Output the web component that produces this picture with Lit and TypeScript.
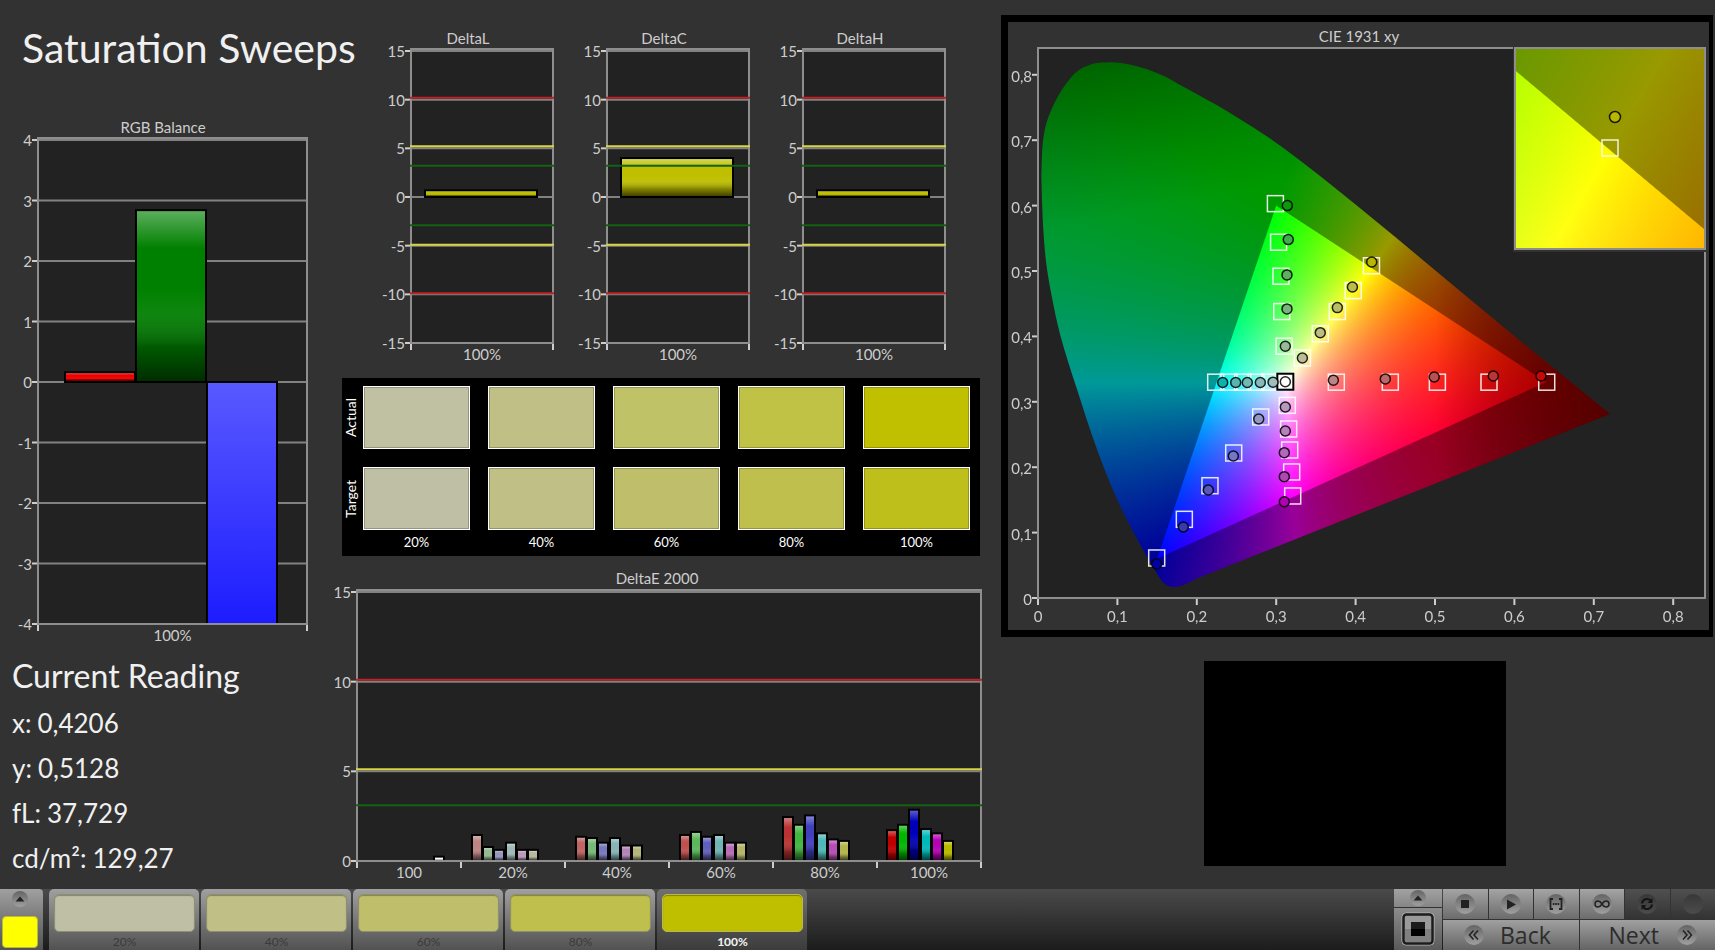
import { LitElement, html, svg, css, nothing } from "lit";
import { customElement, property } from "lit/decorators.js";

interface Bar { x: number; w: number; v: number; color: string; deep?: boolean }
interface Limit { v: number; color: string }
interface ChartSpec {
  w: number; h: number;
  left: number; top: number; right: number; bottom: number;
  title: string; titleX: number; titleY: number;
  min: number; max: number; step: number;
  cats: string[];
  limits: Limit[];
  bars: Bar[];
}

const RED = "#bc2226", YELLOW = "#d8d444", GREEN = "#126212";

@customElement("bar-chart")
class BarChart extends LitElement {
  @property({ attribute: false }) spec!: ChartSpec;

  static styles = css`
    :host { display: block; }
    .chart { display: block; width: 100%; height: auto; overflow: visible; }
    .label { font: 15px Lato, "Liberation Sans", sans-serif; fill: #cdcdcd; }
    .mid { text-anchor: middle; }
    .end { text-anchor: end; }
    .plot { fill: #222; }
    .frame { fill: none; stroke: #8e8e8e; stroke-width: 2; }
    .grid { stroke: #818181; stroke-width: 2; }
    .limit { stroke-width: 2; }
    .tick { stroke: #cdcdcd; stroke-width: 2; }
    .bar { stroke: #000; stroke-width: 2; }
    .deep { fill: url(#deep); }
    .gloss { fill: url(#gloss); }
  `;

  render() {
    const s = this.spec;
    const y = (v: number) => s.top + 2 + ((s.max - v) / (s.max - s.min)) * (s.bottom - s.top - 2);
    const limitY = (v: number) => y(v) - (v > 0 ? 2 : 1);
    const ticks: number[] = [];
    for (let v = s.max; v >= s.min; v -= s.step) ticks.push(v);
    const catW = (s.right - s.left) / s.cats.length;
    return html`
      <svg class="chart" viewBox="0 0 ${s.w} ${s.h}" role="img" aria-label=${s.title}>
        <defs>
          <linearGradient id="gloss" x1="0" y1="0" x2="0" y2="1">
            <stop offset="0" stop-color="#fff" stop-opacity="0.36" />
            <stop offset="0.22" stop-color="#fff" stop-opacity="0" />
            <stop offset="0.45" stop-color="#fff" stop-opacity="0" />
            <stop offset="0.56" stop-color="#fff" stop-opacity="0.04" />
            <stop offset="0.66" stop-color="#777" stop-opacity="0.12" />
            <stop offset="0.8" stop-color="#000" stop-opacity="0.3" />
            <stop offset="1" stop-color="#000" stop-opacity="0.65" />
          </linearGradient>
          <linearGradient id="deep" x1="0" y1="0" x2="0" y2="1">
            <stop offset="0" stop-color="#fff" stop-opacity="0.35" />
            <stop offset="1" stop-color="#fff" stop-opacity="0.1" />
          </linearGradient>
          <clipPath id="plot">
            <rect x=${s.left} y=${s.top} width=${s.right - s.left} height=${s.bottom - s.top} />
          </clipPath>
        </defs>
        <text class="label mid" x=${s.titleX} y=${s.titleY}>${s.title}</text>
        <rect class="plot" x=${s.left} y=${s.top} width=${s.right - s.left} height=${s.bottom - s.top} />
        ${ticks.map((v) => svg`
          <line class="grid" x1=${s.left} x2=${s.right} y1=${y(v)} y2=${y(v)} />
          <line class="tick" x1=${s.left - 6} x2=${s.left - 1} y1=${y(v)} y2=${y(v)} />
          <text class="label end" x=${s.left - 6} y=${y(v) + 6}>${v}</text>`)}
        <g clip-path="url(#plot)">
          ${s.bars.map((b) => {
            const top = Math.min(y(b.v), y(0)), h = Math.abs(y(b.v) - y(0));
            return svg`
              <rect class="bar" x=${b.x} y=${top} width=${b.w} height=${h} fill=${b.color} />
              <rect class=${b.deep ? "deep" : "gloss"} x=${b.x + 1} y=${top + 1} width=${b.w - 2} height=${Math.max(h - 2, 0)} />`;
          })}
        </g>
        <rect class="frame" x=${s.left} y=${s.top} width=${s.right - s.left} height=${s.bottom - s.top} />
        ${s.limits.map((l) => svg`
          <line class="limit" x1=${s.left - 1} x2=${s.right + 1} y1=${limitY(l.v)} y2=${limitY(l.v)} stroke=${l.color} />`)}
        ${s.cats.map((c, i) => svg`
          <line class="tick" x1=${s.left + i * catW} x2=${s.left + i * catW} y1=${s.bottom + 1} y2=${s.bottom + 7} />
          <text class="label mid" x=${s.left + (i + 0.5) * catW} y=${s.bottom + 17}>${c}</text>`)}
        <line class="tick" x1=${s.right} x2=${s.right} y1=${s.bottom + 1} y2=${s.bottom + 7} />
      </svg>`;
  }
}

const deltaSpec = (title: string, v: number): ChartSpec => ({
  w: 196, h: 345, left: 69, top: 24, right: 211, bottom: 318,
  title, titleX: 126, titleY: 19, min: -15, max: 15, step: 5, cats: ["100%"],
  limits: [
    { v: 10, color: RED }, { v: 5, color: YELLOW }, { v: 3, color: GREEN },
    { v: -3, color: GREEN }, { v: -5, color: YELLOW }, { v: -10, color: RED },
  ],
  bars: [{ x: 83, w: 112, v, color: "#bfbf00" }],
});

const rgbSpec: ChartSpec = {
  w: 342, h: 530, left: 38, top: 21, right: 307, bottom: 507,
  title: "RGB Balance", titleX: 163, titleY: 16, min: -4, max: 4, step: 1, cats: ["100%"], limits: [],
  bars: [
    { x: 65, w: 70, v: 0.16, color: "#f00000" },
    { x: 136, w: 70, v: 2.84, color: "#008000" },
    { x: 207, w: 70, v: -4.2, color: "#0000ff", deep: true },
  ],
};

const deltaEGroups: { x: number; values: number[]; colors: string[] }[] = [
  { x: 130, values: [1.45, 0.78, 0.62, 1.02, 0.62, 0.62], colors: ["#bd8484", "#94b894", "#9494bd", "#a0b8b8", "#b89ab8", "#b8b89c"] },
  { x: 234, values: [1.35, 1.28, 1.02, 1.28, 0.86, 0.86], colors: ["#bf6464", "#78b878", "#7878bd", "#88b4b8", "#b484b8", "#b4b47c"] },
  { x: 338, values: [1.45, 1.62, 1.35, 1.45, 1.02, 1.02], colors: ["#bf5050", "#5cb85c", "#6060bd", "#70b4b4", "#b86cb4", "#b4b468"] },
  { x: 441, values: [2.45, 2.02, 2.54, 1.54, 1.2, 1.12], colors: ["#b83434", "#40b840", "#4040bd", "#50b8b8", "#b84cb4", "#b4b44c"] },
  { x: 545, values: [1.72, 2.02, 2.86, 1.78, 1.54, 1.12], colors: ["#bf0000", "#00b800", "#0000b8", "#00b8b8", "#b800b8", "#b8b800"] },
];

const deltaESpec: ChartSpec = {
  w: 658, h: 320, left: 15, top: 24, right: 639, bottom: 295,
  title: "DeltaE 2000", titleX: 315, titleY: 18, min: 0, max: 15, step: 5,
  cats: ["100", "20%", "40%", "60%", "80%", "100%"],
  limits: [{ v: 10, color: RED }, { v: 5, color: YELLOW }, { v: 3, color: GREEN }],
  bars: [
    { x: 92, w: 10, v: 0.24, color: "#fff" },
    ...deltaEGroups.flatMap((g) => g.values.map((v, i) => ({ x: g.x + Math.round(i * 11.2), w: 10, v, color: g.colors[i] }))),
  ],
};

type P = [number, number];

const LOCUS: P[] = [
  [0.0042, 0.645], [0.0059, 0.6947], [0.0109, 0.7275], [0.0228, 0.762], [0.0361, 0.7875], [0.0508, 0.8067],
  [0.0718, 0.8176], [0.088, 0.819], [0.1054, 0.818], [0.131, 0.8109], [0.1558, 0.7997], [0.1814, 0.7829], [0.2393, 0.7436],
  [0.3069, 0.6901], [0.3992, 0.6024], [0.6045, 0.396], [0.7204, 0.2813],
];
const LOCUS_LOW: P[] = [
  [0.2015, 0.0306], [0.186, 0.0215], [0.1746, 0.0171], [0.1642, 0.0182], [0.1558, 0.0262], [0.141, 0.0557],
  [0.12, 0.101], [0.0985, 0.154], [0.0739, 0.2285], [0.0487, 0.3206], [0.0285, 0.4], [0.0167, 0.4653],
  [0.0101, 0.5145], [0.0059, 0.58], [0.0042, 0.645],
];
const GAMUT: P[] = [[0.64, 0.33], [0.3, 0.6], [0.15, 0.06]];

const TARGETS: P[] = [
  [0.299, 0.603], [0.303, 0.544], [0.306, 0.492], [0.307, 0.438], [0.31, 0.385],
  [0.333, 0.367], [0.3555, 0.404], [0.377, 0.438], [0.397, 0.47], [0.42, 0.508],
  [0.3757, 0.33], [0.4437, 0.33], [0.503, 0.33], [0.568, 0.33], [0.6407, 0.33],
  [0.2238, 0.33], [0.2405, 0.33], [0.2578, 0.33], [0.2746, 0.33], [0.292, 0.33],
  [0.314, 0.2946], [0.3157, 0.2584], [0.317, 0.2263], [0.3195, 0.1927], [0.3208, 0.156],
  [0.2805, 0.2768], [0.2465, 0.2217], [0.2166, 0.1717], [0.1843, 0.1203], [0.1495, 0.0612],
];
const READINGS: [number, number, string][] = [
  [0.314, 0.6, "#0b9a0b"], [0.3152, 0.548, "#3fae4f"], [0.3136, 0.494, "#5cb060"], [0.3136, 0.442, "#78b47c"], [0.3115, 0.385, "#98b898"],
  [0.333, 0.367, "#bcbc9c"], [0.3555, 0.4057, "#bcbc84"], [0.377, 0.444, "#bcbc68"], [0.396, 0.4755, "#bcbc48"], [0.4203, 0.5138, "#b8b800"],
  [0.372, 0.333, "#bc8484"], [0.4374, 0.335, "#bc6868"], [0.499, 0.338, "#bc5050"], [0.5734, 0.3395, "#bc3434"], [0.6335, 0.3395, "#c80808"],
  [0.2326, 0.3295, "#10b0b0"], [0.249, 0.3295, "#58b4b0"], [0.2636, 0.3295, "#74b8b4"], [0.28, 0.3295, "#88b8b8"], [0.296, 0.33, "#a0bcbc"],
  [0.3115, 0.292, "#b898bc"], [0.3115, 0.2554, "#b880bc"], [0.3102, 0.2222, "#b468bc"], [0.3102, 0.1855, "#b048b4"], [0.3102, 0.1472, "#b000b0"],
  [0.278, 0.2737, "#9498c4"], [0.246, 0.2171, "#7478c4"], [0.2145, 0.1651, "#5858bc"], [0.183, 0.1086, "#3838b0"], [0.1495, 0.052, "#0000a8"],
];

/** Piecewise-linear lookup over [input, output] pairs. */
const ramp = (v: number, stops: P[]) => {
  if (v <= stops[0][0]) return stops[0][1];
  for (let i = 1; i < stops.length; i++) {
    const [a, fa] = stops[i - 1], [b, fb] = stops[i];
    if (v <= b) return fa + ((fb - fa) * (v - a)) / (b - a);
  }
  return stops[stops.length - 1][1];
};

/** Paints chromaticity colours over a window of the xy plane; dimmed outside the gamut triangle. */
function paint(canvas: HTMLCanvasElement, x0: number, x1: number, y0: number, y1: number) {
  const ctx = canvas.getContext("2d")!;
  const { width: W, height: H } = canvas;
  const img = ctx.createImageData(W, H);
  const kx = W / (x1 - x0), ky = H / (y1 - y0);
  const g = GAMUT.map(([x, y]) => [(x - x0) * kx, (y1 - y) * ky]);
  for (let j = 0; j < H; j++) {
    for (let i = 0; i < W; i++) {
      const x = x0 + (i + 0.5) / kx, y = y1 - (j + 0.5) / ky, z = 1 - x - y;
      const r = Math.max(0, 3.2406 * x - 1.5372 * y - 0.4986 * z);
      const gr = Math.max(0, -0.9689 * x + 1.8758 * y + 0.0415 * z);
      const b = Math.max(0, 0.0557 * x - 0.204 * y + 1.057 * z);
      const m = Math.max(r, gr, b, 1e-6);
      let inside = 1;
      for (let e = 0; e < 3; e++) {
        const [ax, ay] = g[e], [bx, by] = g[(e + 1) % 3];
        const d = ((by - ay) * (i + 0.5 - ax) - (bx - ax) * (j + 0.5 - ay)) / Math.hypot(bx - ax, by - ay);
        inside = Math.min(inside, Math.max(0, Math.min(1, d + 0.5)));
      }
      const fall = ramp(x, [[0.5, 1], [0.57, 0.8], [0.64, 0.66], [0.72, 0.55]]) *
        ramp(y - 0.25 * x, [[0.56, 1], [0.64, 0.9], [0.8, 0.66]]);
      const k = (255 / m) * fall * (0.6 + 0.4 * inside);
      const o = (j * W + i) * 4;
      img.data[o] = r * k; img.data[o + 1] = gr * k; img.data[o + 2] = b * k; img.data[o + 3] = 255;
    }
  }
  ctx.putImageData(img, 0, 0);
  ctx.globalCompositeOperation = "destination-in";
  const sx = (x: number) => (x - x0) * kx, sy = (y: number) => (y1 - y) * ky;
  ctx.beginPath();
  ctx.moveTo(sx(LOCUS[0][0]), sy(LOCUS[0][1]));
  for (const run of [LOCUS, LOCUS_LOW]) {
    ctx.lineTo(sx(run[0][0]), sy(run[0][1]));
    for (let i = 0; i < run.length - 1; i++) {
      const p0 = run[Math.max(0, i - 1)], p1 = run[i], p2 = run[i + 1], p3 = run[Math.min(run.length - 1, i + 2)];
      const d = Math.hypot(p2[0] - p1[0], p2[1] - p1[1]);
      const tangent = (a: P, b: P): P => {
        const n = Math.hypot(b[0] - a[0], b[1] - a[1]) || 1;
        return [((b[0] - a[0]) / n) * d / 3, ((b[1] - a[1]) / n) * d / 3];
      };
      const t1 = tangent(p0, p2), t2 = tangent(p1, p3);
      ctx.bezierCurveTo(sx(p1[0] + t1[0]), sy(p1[1] + t1[1]), sx(p2[0] - t2[0]), sy(p2[1] - t2[1]), sx(p2[0]), sy(p2[1]));
    }
  }
  ctx.closePath();
  ctx.fill();
}

@customElement("cie-chart")
class CieChart extends LitElement {
  static styles = css`
    :host { display: block; }
    .chart { display: block; width: 100%; height: auto; }
    .label { font: 15px Lato, "Liberation Sans", sans-serif; fill: #cdcdcd; }
    .mid { text-anchor: middle; }
    .end { text-anchor: end; }
    .plot { fill: #222; }
    .frame { fill: none; stroke: #8e8e8e; stroke-width: 2; }
    .tick { stroke: #cdcdcd; stroke-width: 2; }
    .map { display: block; width: 100%; height: 100%; }
    .target { fill: none; stroke: #fff; stroke-opacity: 0.88; stroke-width: 1.5; }
    .reading { stroke: #000; stroke-opacity: 0.85; stroke-width: 1.5; }
    .white { fill: #fff; stroke: #000; stroke-width: 2; }
    .matte { fill: #323232; }
  `;

  firstUpdated() {
    const [main, inset] = Array.from(this.renderRoot.querySelectorAll("canvas"));
    paint(main, 0, 667 / 794, 0, 550 / 654);
    paint(inset, 0.3945, 0.4445, 0.4805, 0.5305);
  }

  render() {
    const L = 30, T = 26, W = 667, H = 550;
    const sx = (x: number) => L + x * 794, sy = (y: number) => T + H - y * 654;
    const steps = [0, 1, 2, 3, 4, 5, 6, 7, 8];
    const name = (n: number) => (n === 0 ? "0" : `0,${n}`);
    return html`
      <svg class="chart" viewBox="0 0 701 608" role="img" aria-label="CIE 1931 xy">
        <text class="label mid" x="351" y="20">CIE 1931 xy</text>
        <rect class="plot" x=${L} y=${T} width=${W} height=${H} />
        <foreignObject x=${L} y=${T} width=${W} height=${H}>
          <canvas class="map" width=${W} height=${H}></canvas>
        </foreignObject>
        <rect class="frame" x=${L} y=${T} width=${W} height=${H} />
        ${steps.map((n) => svg`
          <line class="tick" x1=${sx(n / 10)} x2=${sx(n / 10)} y1=${T + H + 1} y2=${T + H + 7} />
          <text class="label mid" x=${sx(n / 10)} y=${T + H + 24}>${name(n)}</text>
          <line class="tick" x1=${L - 6} x2=${L - 1} y1=${sy(n / 10)} y2=${sy(n / 10)} />
          <text class="label end" x=${L - 6} y=${sy(n / 10) + 7}>${name(n)}</text>`)}
        ${TARGETS.map(([x, y]) => svg`<rect class="target" x=${sx(x) - 8} y=${sy(y) - 8} width="16" height="16" />`)}
        <rect class="white" x=${sx(0.3115) - 8} y=${sy(0.3307) - 8} width="16" height="16" />
        <circle class="reading" cx=${sx(0.3115)} cy=${sy(0.3307)} r="5" fill="#fff" />
        ${READINGS.map(([x, y, c]) => svg`<circle class="reading" cx=${sx(x)} cy=${sy(y)} r="5" fill=${c} />`)}
        <rect class="matte" x="505" y="24" width="196" height="206" />
        <foreignObject x="507" y="26" width="190" height="201">
          <canvas class="map" width="190" height="201"></canvas>
        </foreignObject>
        <rect class="frame" x="507" y="26" width="190" height="201" />
        <rect class="target" x="594" y="118" width="16" height="16" />
        <circle class="reading" cx="607" cy="95" r="5.5" fill="#b8b800" />
      </svg>`;
  }
}

const LEVELS = ["20%", "40%", "60%", "80%", "100%"];
const ACTUAL = ["#c0c0a3", "#c0c086", "#c0c268", "#c0c246", "#c0c000"];
const TARGET = ["#bfbfa5", "#bfbf86", "#bfbf6b", "#bfbf4d", "#bfbf1c"];
const STEP = ["#bfbfa5", "#bfbf86", "#bfbf6b", "#bfbf4d", "#bfbf00"];

@customElement("app-root")
class AppRoot extends LitElement {
  static styles = css`
    :host {
      display: flex; flex-direction: column; min-height: 100vh; overflow-x: hidden;
      background: #323232; color: #f0f0f0; font-family: Lato, "Liberation Sans", sans-serif;
    }
    * { box-sizing: border-box; }
    h1, h2, dl, dt, dd { margin: 0; font-weight: 400; }
    button { font: inherit; border: 0; padding: 0; margin: 0; }
    .main { flex: 1; display: grid; grid-template-columns: 342fr 658fr 715fr; align-items: start; }
    .side { min-width: 0; }
    .title { padding: 18px 0 0 22px; font-size: 41px; line-height: 60px; white-space: nowrap; margin-bottom: 39px; }
    .sub { padding: 6px 0 0 12px; font-size: 32px; line-height: 46px; }
    .readings { padding: 2px 0 0 12px; font-size: 26px; line-height: 44px; display: grid; row-gap: 1px; }
    .reading { display: flex; gap: 6px; }
    .middle { min-width: 0; display: flex; flex-direction: column; padding-top: 25px; }
    .deltas { display: grid; grid-template-columns: repeat(3, 196fr) 70fr; }
    .swatches {
      margin: 8px 20px 10px 0; padding: 8px 10px 0 0; background: #000; color: #fff; font-size: 13px;
      display: grid; grid-template-columns: 21px 1fr; grid-template-rows: 63px 18px 63px 26px;
    }
    .side-label {
      writing-mode: vertical-rl; transform: rotate(180deg); text-align: center; line-height: 18px; width: 18px;
      font-size: 14px;
    }
    .cells { display: grid; grid-template-columns: repeat(5, 1fr); column-gap: 18px; }
    .lower-row { grid-row: 3; }
    .levels { grid-column: 2; grid-row: 4; text-align: center; line-height: 24px; }
    .swatch { border: 1px solid #fff; box-shadow: inset 0 0 0 1px #00000038; }
    .right { min-width: 0; padding: 15px 2px 0 1px; }
    .cie { border: solid #000; border-width: 7px 4px 7px 7px; }
    .stage { display: grid; grid-template-columns: 203fr 302fr 207fr; margin-top: 24px; }
    .screen { grid-column: 2; background: #000; aspect-ratio: 302 / 205; }
    .bar { display: flex; height: 61px; background: linear-gradient(#4a4a4a, #1c1c1c); }
    .metal { background: linear-gradient(#a0a0a0, #7c7c7c 45%, #525252); }
    .picker {
      width: 43px; border-radius: 0 4px 0 0; margin-right: 6px; padding-right: 3px;
      display: flex; flex-direction: column; align-items: center;
    }
    .picker .chip { width: 36px; height: 32px; background: #ff0; border: 1px solid #b9b93c; border-radius: 4px; margin-top: 9px; }
    .dot { display: grid; place-items: center; border-radius: 50%; background: linear-gradient(#646464, #a0a0a0); width: 20px; height: 20px; }
    .picker .dot { width: 16px; height: 16px; margin-top: 2px; }
    .steps { display: flex; gap: 2px; flex: 1; min-width: 0; }
    .step { width: 150px; border-radius: 5px 5px 0 0; padding: 4px 4px 0 5px; color: #3a3a3a; font-size: 12px; }
    .step .fill { display: block; height: 38px; border-radius: 5px; border: 1px solid #8e8e72; box-shadow: inset 0 1px 1px #00000050; }
    .step .name { display: block; line-height: 16px; margin-top: 2px; }
    .step.on { background: linear-gradient(#707070, #565656 50%, #3c3c3c); color: #f4f4f4; font-weight: 700; }
    .step.on .fill { border-color: #b9b950; }
    .controls { display: grid; grid-template-columns: 48px 272px; column-gap: 1px; }
    .source { display: grid; grid-template-rows: 18px 42px; row-gap: 1px; background: #333; }
    .source button { display: grid; place-items: center; background: linear-gradient(#a2a2a2, #868686); }
    .source .lower { background: linear-gradient(#8c8c8c, #5a5a5a); }
    .source .dot { width: 16px; height: 16px; }
    .pads { display: grid; grid-template-rows: 30px 30px; row-gap: 1px; background: #333; }
    .row { display: grid; grid-template-columns: repeat(6, 1fr); column-gap: 1px; }
    .row.nav { grid-template-columns: 1fr 1fr; }
    .pad { display: grid; place-items: center; background: linear-gradient(#a4a4a4, #6c6c6c); }
    .pad.off { background: linear-gradient(#505050, #333); }
    .pad.off .dot { background: linear-gradient(#383838, #4c4c4c); }
    .go {
      display: flex; align-items: center; color: #2c2c2c; background: linear-gradient(#a0a0a0, #646464);
      font: 500 23px/30px "Open Sans", "Noto Sans", sans-serif;
    }
    .go.back { padding-left: 21px; gap: 16px; }
    .go.next { justify-content: flex-end; padding-right: 18px; gap: 18px; }
    .glyph { display: block; }
    .dot .glyph { width: 100%; height: 100%; }
  `;

  private dot(glyph: unknown) {
    return html`<span class="dot">${glyph}</span>`;
  }

  private icon(name: string) {
    const art: Record<string, unknown> = {
      stop: svg`<rect x="6" y="6" width="8" height="8" fill="#222" />`,
      play: svg`<path d="M6 5.500V15.500L15 10.500Z" fill="#222" />`,
      range: svg`<path d="M7 5H4.500V15H7M13 5H15.500V15H13" fill="none" stroke="#222" stroke-width="1.800" /><path d="M6.800 10h1.600M9.200 10h1.600M11.600 10h1.600" stroke="#222" stroke-width="1.800" />`,
      loop: svg`<path d="M10 10C8.500 7.500 7.200 7 6 7a3 3 0 0 0 0 6c1.200 0 2.500-.5 4-3s2.800-3 4-3a3 3 0 0 1 0 6c-1.200 0-2.500-.5-4-3Z" fill="none" stroke="#222" stroke-width="1.500" />`,
      sync: svg`<path d="M5 9.500a5 5 0 0 1 8.500-3M15 10.500a5 5 0 0 1-8.500 3" fill="none" stroke="#151515" stroke-width="2.200" /><path d="M15.500 4v5h-5ZM4.500 16v-5h5Z" fill="#151515" />`,
      back: svg`<path d="M9.500 5.500L5.500 10l4 4.500M14 5.500L10 10l4 4.500" fill="none" stroke="#222" stroke-width="1.500" />`,
      next: svg`<path d="M10.500 5.500l4 4.500-4 4.500M6 5.500L10 10l-4 4.500" fill="none" stroke="#222" stroke-width="1.500" />`,
      up: svg`<path d="M4.500 13L10 7l5.500 6Z" fill="#222" />`,
    };
    return art[name] ? html`<svg class="glyph" viewBox="0 0 20 20" aria-hidden="true">${art[name]}</svg>` : nothing;
  }

  private pad(name: string, label: string, off = false) {
    return html`<button class="pad ${off ? "off" : ""}" aria-label=${label}>${this.dot(this.icon(name))}</button>`;
  }

  private swatchRow(label: string, colors: string[], row = "") {
    return html`<span class="side-label ${row}">${label}</span>
      <div class="cells ${row}">${colors.map((c) => html`<span class="swatch" style="background:${c}"></span>`)}</div>`;
  }

  render() {
    return html`
      <main class="main">
        <section class="side">
          <h1 class="title">Saturation Sweeps</h1>
          <bar-chart .spec=${rgbSpec}></bar-chart>
          <h2 class="sub">Current Reading</h2>
          <dl class="readings">
            ${[["x:", "0,4206"], ["y:", "0,5128"], ["fL:", "37,729"], ["cd/m²:", "129,27"]].map(
              ([k, v]) => html`<div class="reading"><dt>${k}</dt><dd>${v}</dd></div>`)}
          </dl>
        </section>
        <section class="middle">
          <div class="deltas">
            <bar-chart .spec=${deltaSpec("DeltaL", 0.68)}></bar-chart>
            <bar-chart .spec=${deltaSpec("DeltaC", 4)}></bar-chart>
            <bar-chart .spec=${deltaSpec("DeltaH", 0.68)}></bar-chart>
          </div>
          <div class="swatches">
            ${this.swatchRow("Actual", ACTUAL)}
            ${this.swatchRow("Target", TARGET, "lower-row")}
            <div class="cells levels">${LEVELS.map((l) => html`<span>${l}</span>`)}</div>
          </div>
          <bar-chart .spec=${deltaESpec}></bar-chart>
        </section>
        <section class="right">
          <div class="cie"><cie-chart></cie-chart></div>
          <div class="stage"><div class="screen"></div></div>
        </section>
      </main>
      <footer class="bar">
        <button class="picker metal" aria-label="Current colour">
          ${this.dot(this.icon("up"))}<span class="chip"></span>
        </button>
        <div class="steps">
          ${LEVELS.map((l, i) => html`
            <button class="step metal ${i === 4 ? "on" : ""}">
              <span class="fill" style="background:${STEP[i]}"></span><span class="name">${l}</span>
            </button>`)}
        </div>
        <div class="controls">
          <div class="source">
            <button aria-label="Expand">${this.dot(this.icon("up"))}</button>
            <button class="lower" aria-label="Pattern window">
              <svg class="glyph" width="34" height="34" viewBox="0 0 34 34" aria-hidden="true">
                <rect x="1" y="1" width="32" height="32" rx="4" fill="#8c8c8c" stroke="#b4b4b4" />
                <rect x="2.500" y="2.500" width="29" height="29" rx="3" fill="#9a9a9a" stroke="#1c1c1c" stroke-width="2.500" />
                <path d="M4 17H30V30H4Z" fill="#808080" />
                <rect x="10" y="10" width="14" height="14" fill="#000" />
                <rect x="10" y="10" width="14" height="7" fill="#1c1c1c" />
              </svg>
            </button>
          </div>
          <div class="pads">
            <div class="row">
              ${this.pad("stop", "Stop")} ${this.pad("play", "Play")} ${this.pad("range", "Range")}
              ${this.pad("loop", "Loop")} ${this.pad("sync", "Sync", true)} ${this.pad("none", "Record", true)}
            </div>
            <div class="row nav">
              <button class="go back">${this.dot(this.icon("back"))}Back</button>
              <button class="go next">Next${this.dot(this.icon("next"))}</button>
            </div>
          </div>
        </div>
      </footer>`;
  }
}
